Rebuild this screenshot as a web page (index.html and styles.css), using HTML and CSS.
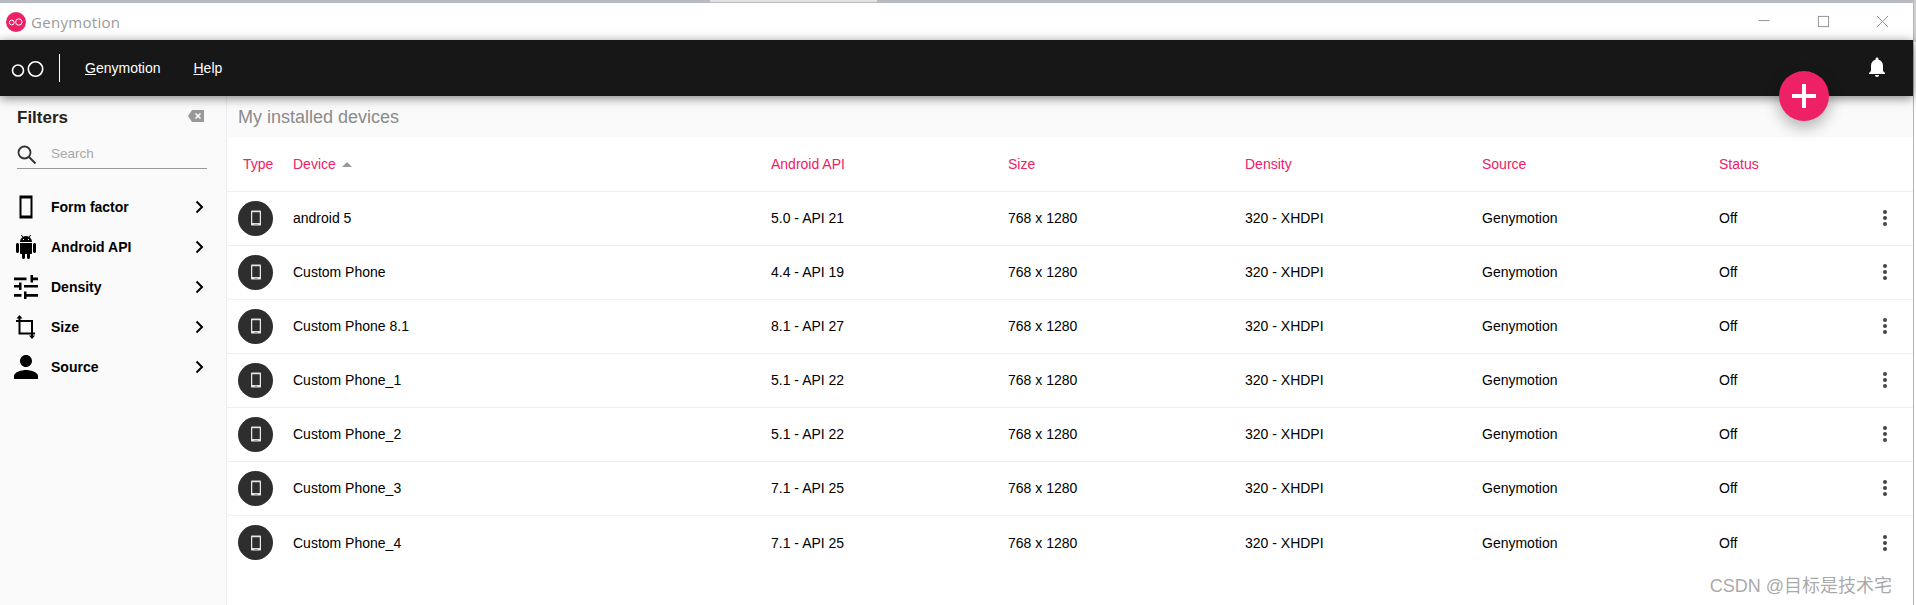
FILE: index.html
```html
<!DOCTYPE html>
<html lang="en">
<head>
<meta charset="utf-8">
<title>Genymotion</title>
<link rel="stylesheet" href="styles.css">
</head>
<body>
<div class="window">
  <div class="titlebar">
    <div class="title-left">
      <svg class="app-logo" viewBox="0 0 20 20"><circle cx="10" cy="10" r="10" fill="#ee2066"/><circle cx="5.700" cy="10.500" r="2.400" fill="none" stroke="#fff" stroke-width="1"/><circle cx="12.800" cy="10" r="3.200" fill="none" stroke="#fff" stroke-width="1"/></svg>
      <span class="app-name">Genymotion</span>
    </div>
    <div class="win-controls">
      <svg class="win-icon" viewBox="0 0 14 14"><path d="M0.500 6H12.500" stroke="#8c8c8c" stroke-width="1" fill="none"/></svg>
      <svg class="win-icon" viewBox="0 0 14 14"><rect x="1.500" y="1.500" width="11" height="11" stroke="#8c8c8c" stroke-width="1" fill="none"/></svg>
      <svg class="win-icon" viewBox="0 0 14 14"><path d="M1 1L13 13M13 1L1 13" stroke="#8c8c8c" stroke-width="1" fill="none"/></svg>
    </div>
  </div>
  <header class="appbar">
    <svg class="bar-logo" viewBox="0 0 34 18"><circle cx="7" cy="10.500" r="5.500" fill="none" stroke="#fff" stroke-width="1.600"/><circle cx="24.500" cy="9" r="7.200" fill="none" stroke="#fff" stroke-width="1.600"/></svg>
    <span class="bar-divider"></span>
    <nav class="menu">
      <span class="menu-item"><u>G</u>enymotion</span>
      <span class="menu-item"><u>H</u>elp</span>
    </nav>
    <svg class="bell" viewBox="0 0 24 24"><path fill="#fff" d="M12 22c1.100 0 2-.9 2-2h-4c0 1.100.9 2 2 2zm6-6v-5c0-3.100-1.600-5.600-4.500-6.300V4c0-.8-.7-1.500-1.500-1.500s-1.500.7-1.500 1.500v.7C7.600 5.400 6 7.900 6 11v5l-2 2v1h16v-1l-2-2z"/></svg>
  </header>
  <button class="fab" type="button" aria-label="Add device">
    <svg viewBox="0 0 24 24" class="fab-icon"><path d="M12 0V24M0 12H24" stroke="#fff" stroke-width="4" fill="none"/></svg>
  </button>
  <div class="body">
    <aside class="sidebar">
      <div class="filter-head">
        <span class="filter-title">Filters</span>
        <svg class="clear" viewBox="0 0 16 12"><path fill="#999" d="M4 0H16V12H4L0 6Z"/><path d="M7.500 3.500L12.500 8.500M12.500 3.500L7.500 8.500" stroke="#fff" stroke-width="1.500"/></svg>
      </div>
      <div class="search">
        <svg class="search-icon" viewBox="0 0 20 20"><circle cx="7.500" cy="7.500" r="6" fill="none" stroke="#333" stroke-width="1.800"/><path d="M12 12L18.500 18.500" stroke="#333" stroke-width="2"/></svg>
        <span class="search-text">Search</span>
      </div>
      <ul class="filters">
        <li class="filter">
          <svg class="filter-icon" viewBox="0 0 24 24"><path d="M5.500 0.500H18.500V23.500H5.500ZM7.500 3.500V20.500H16.500V3.500Z" fill="#000" fill-rule="evenodd"/></svg>
          <span class="filter-name">Form factor</span>
          <svg class="chev" viewBox="0 0 10 14"><path d="M1.500 1.500L7 7L1.500 12.500" stroke="#000" stroke-width="2" fill="none"/></svg>
        </li>
        <li class="filter">
          <svg class="filter-icon" viewBox="0 0 24 24"><path fill="#000" d="M6 18c0 .6.400 1 1 1h1v3.500c0 .8.700 1.500 1.500 1.500s1.500-.7 1.500-1.500V19h2v3.500c0 .8.700 1.500 1.500 1.500s1.500-.7 1.500-1.500V19h1c.6 0 1-.4 1-1V8H6v10zM3.500 8C2.700 8 2 8.700 2 9.500v7c0 .8.700 1.500 1.500 1.500S5 17.300 5 16.500v-7C5 8.700 4.300 8 3.500 8zm17 0c-.8 0-1.500.7-1.500 1.500v7c0 .8.700 1.500 1.500 1.500s1.500-.7 1.500-1.500v-7c0-.8-.7-1.500-1.500-1.500zm-4.970-5.840l1.300-1.300c.2-.2.200-.5 0-.7-.2-.2-.5-.2-.7 0l-1.480 1.480C13.850 1.230 12.950 1 12 1c-.96 0-1.860.23-2.660.63L7.850.15c-.2-.2-.5-.2-.7 0-.2.200-.2.500 0 .7l1.310 1.310C6.970 3.260 6 5.010 6 7h12c0-1.990-.97-3.750-2.470-4.840zM10 5H9V4h1v1zm5 0h-1V4h1v1z"/></svg>
          <span class="filter-name">Android API</span>
          <svg class="chev" viewBox="0 0 10 14"><path d="M1.500 1.500L7 7L1.500 12.500" stroke="#000" stroke-width="2" fill="none"/></svg>
        </li>
        <li class="filter">
          <svg class="filter-icon" viewBox="0 0 24 24"><path fill="#000" d="M0 19v2.700h7.500V19H0zM0 2.500v2.700h12.500V2.500H0zM12.500 24v-2.300H24V19H12.500v-2.400H10V24h2.500zM5 7.500v2.500H0v2.600h5V15h2.500V7.500H5zM24 12.600V10H10v2.600h14zM16.500 7.500H19V5.200h5V2.500h-5V0h-2.500v7.500z"/></svg>
          <span class="filter-name">Density</span>
          <svg class="chev" viewBox="0 0 10 14"><path d="M1.500 1.500L7 7L1.500 12.500" stroke="#000" stroke-width="2" fill="none"/></svg>
        </li>
        <li class="filter">
          <svg class="filter-icon" viewBox="0 0 24 24"><path fill="none" stroke="#000" stroke-width="2" d="M5.500 3V18.500H21M2 6H18V21"/><path fill="#000" d="M5.500 0L8.500 3.500H2.500zM18 24L15 20.500H21z"/></svg>
          <span class="filter-name">Size</span>
          <svg class="chev" viewBox="0 0 10 14"><path d="M1.500 1.500L7 7L1.500 12.500" stroke="#000" stroke-width="2" fill="none"/></svg>
        </li>
        <li class="filter">
          <svg class="filter-icon" viewBox="0 0 24 24"><path fill="#000" d="M12 12c3.300 0 6-2.700 6-6s-2.700-6-6-6-6 2.700-6 6 2.700 6 6 6zm0 3c-4 0-12 2-12 6v3h24v-3c0-4-8-6-12-6z"/></svg>
          <span class="filter-name">Source</span>
          <svg class="chev" viewBox="0 0 10 14"><path d="M1.500 1.500L7 7L1.500 12.500" stroke="#000" stroke-width="2" fill="none"/></svg>
        </li>
      </ul>
    </aside>
    <main class="content">
      <h1 class="heading">My installed devices</h1>
      <div class="row head">
        <span class="type-label">Type</span>
        <span>Device <i class="sort"></i></span>
        <span>Android API</span><span>Size</span><span>Density</span><span>Source</span><span>Status</span><span></span>
      </div>
      <div id="rows"></div>
    </main>
  </div>
  <div class="watermark">CSDN @目标是技术宅</div>
</div>
<script src="app.js"></script>
</body>
</html>
```
FILE: app.js
```js
var devices = [
  ["android 5", "5.0 - API 21"],
  ["Custom Phone", "4.4 - API 19"],
  ["Custom Phone 8.1", "8.1 - API 27"],
  ["Custom Phone_1", "5.1 - API 22"],
  ["Custom Phone_2", "5.1 - API 22"],
  ["Custom Phone_3", "7.1 - API 25"],
  ["Custom Phone_4", "7.1 - API 25"]
];
var html = "";
devices.forEach(function (d) {
  html += '<div class="row device">' +
    '<span class="avatar"><svg viewBox="0 0 12 18" class="phone"><path fill="#e6e6e6" fill-rule="evenodd" d="M1 0H11A1 1 0 0 1 12 1V17A1 1 0 0 1 11 18H1A1 1 0 0 1 0 17V1A1 1 0 0 1 1 0ZM1.500 2V15H10.500V2Z"/><rect x="4" y="16" width="4" height="1" fill="#888"/></svg></span>' +
    '<span>' + d[0] + '</span><span>' + d[1] + '</span><span>768 x 1280</span><span>320 - XHDPI</span><span>Genymotion</span><span>Off</span>' +
    '<span class="dots"><i></i><i></i><i></i></span></div>';
});
document.getElementById("rows").innerHTML = html;
```
FILE: styles.css
```css
* { box-sizing: border-box; }
html, body { margin: 0; padding: 0; height: 100%; background: #fff; overflow: hidden; }
body { font-family: "Liberation Sans", "Noto Sans CJK SC", sans-serif; font-size: 14px; color: #000; }
body::before {
  content: "";
  position: absolute;
  right: 0;
  top: 0;
  width: 3px;
  height: 42px;
  background: #cfcfcf;
}
.window {
  position: relative;
  width: 1914px;
  height: 605px;
  border-top: 3px solid #b8bcc0;
  border-right: 1px solid #b4b4b4;
  display: flex;
  flex-direction: column;
}
.window::before {
  content: "";
  position: absolute;
  left: 710px;
  top: -3px;
  width: 167px;
  height: 2px;
  background: #e2e2e0;
}
.titlebar {
  height: 37px;
  background: #fff;
  display: flex;
  align-items: center;
  justify-content: space-between;
  flex: none;
}
.title-left { display: flex; align-items: center; margin-left: 6px; gap: 5px; }
.app-logo { width: 20px; height: 20px; }
.app-name { font-family: "Open Sans", sans-serif; font-size: 15px; color: #9a9a9a; letter-spacing: .3px; }
.win-controls { display: flex; align-items: center; gap: 46px; margin-right: 24px; }
.win-icon { width: 13px; height: 13px; }
.appbar {
  height: 56px;
  flex: none;
  background: #171717;
  display: flex;
  align-items: center;
  position: relative;
  z-index: 2;
  box-shadow: 0 2px 10px rgba(0,0,0,.5);
  color: #fff;
}
.bar-logo { width: 34px; height: 18px; margin-left: 11px; margin-top: 1px; }
.bar-divider { width: 1px; height: 28px; background: #fff; margin-left: 14px; }
.menu { display: flex; gap: 33px; margin-left: 25px; flex: 1; font-size: 14px; }
.bell { width: 24px; height: 24px; margin-right: 24px; margin-top: -2px; }
.fab {
  position: absolute;
  left: 1779px;
  top: 68px;
  width: 50px;
  height: 50px;
  border-radius: 50%;
  border: 0;
  padding: 0;
  background: #ee2066;
  box-shadow: 0 6px 16px rgba(0,0,0,.3);
  z-index: 3;
  display: flex;
  align-items: center;
  justify-content: center;
}
.fab-icon { width: 24px; height: 24px; }
.body { flex: 1; display: flex; min-height: 0; }
.sidebar { width: 227px; flex: none; background: #fafafa; border-right: 1px solid #eee; padding: 0 17px; }
.filter-head { display: flex; align-items: center; justify-content: space-between; height: 42px; padding-top: 2px; }
.filter-title { font-size: 17px; font-weight: 700; color: #222; }
.clear { width: 16px; height: 12px; margin-top: -5px; margin-right: 5px; }
.search {
  display: flex;
  align-items: center;
  height: 31px;
  border-bottom: 1px solid #9a9a9a;
  width: 190px;
  gap: 14px;
}
.search-icon { width: 20px; height: 20px; margin-top: 3px; }
.search-text { color: #a8a8a8; font-size: 13.500px; }
.filters { list-style: none; margin: 18px 0 0 -3px; padding: 0; }
.filter { height: 40px; display: flex; align-items: center; }
.filter-icon { width: 24px; height: 24px; flex: none; }
.filter-name { font-weight: 700; font-size: 14px; margin-left: 13px; flex: 1; }
.chev { width: 10px; height: 14px; margin-right: 4px; }
.content { flex: 1; min-width: 0; }
.heading { margin: 0; height: 41px; line-height: 42px; font-size: 18px; font-weight: 400; color: #8b8b8b; background: #fafafa; padding-left: 11px; }
.row {
  display: grid;
  grid-template-columns: 66px 478px 237px 237px 237px 237px 1fr 30px;
  align-items: center;
  font-size: 14px;
}
.head { height: 55px; color: #ee2066; border-bottom: 1px solid #eee; }
.type-label { padding-left: 16px; }
.sort { display: inline-block; width: 0; height: 0; border: 5px solid transparent; border-top: 0; border-bottom: 5px solid #999; margin-left: 2px; vertical-align: 2px; }
.device { height: 54px; border-bottom: 1px solid #eee; padding-bottom: 1px; }
.device:last-child { border-bottom: 0; }
.avatar { width: 35px; height: 35px; border-radius: 50%; background: #2e2e2e; margin-left: 11px; display: flex; align-items: center; justify-content: center; }
.phone { width: 10px; height: 16px; }
.dots { display: flex; flex-direction: column; gap: 2px; align-items: center; width: 6px; margin-left: -1px; }
.dots i { width: 4px; height: 4px; border-radius: 50%; background: #444; display: block; }
.watermark { position: absolute; right: 21px; bottom: 8px; font-size: 18px; color: rgba(110,110,110,.6); }
```
